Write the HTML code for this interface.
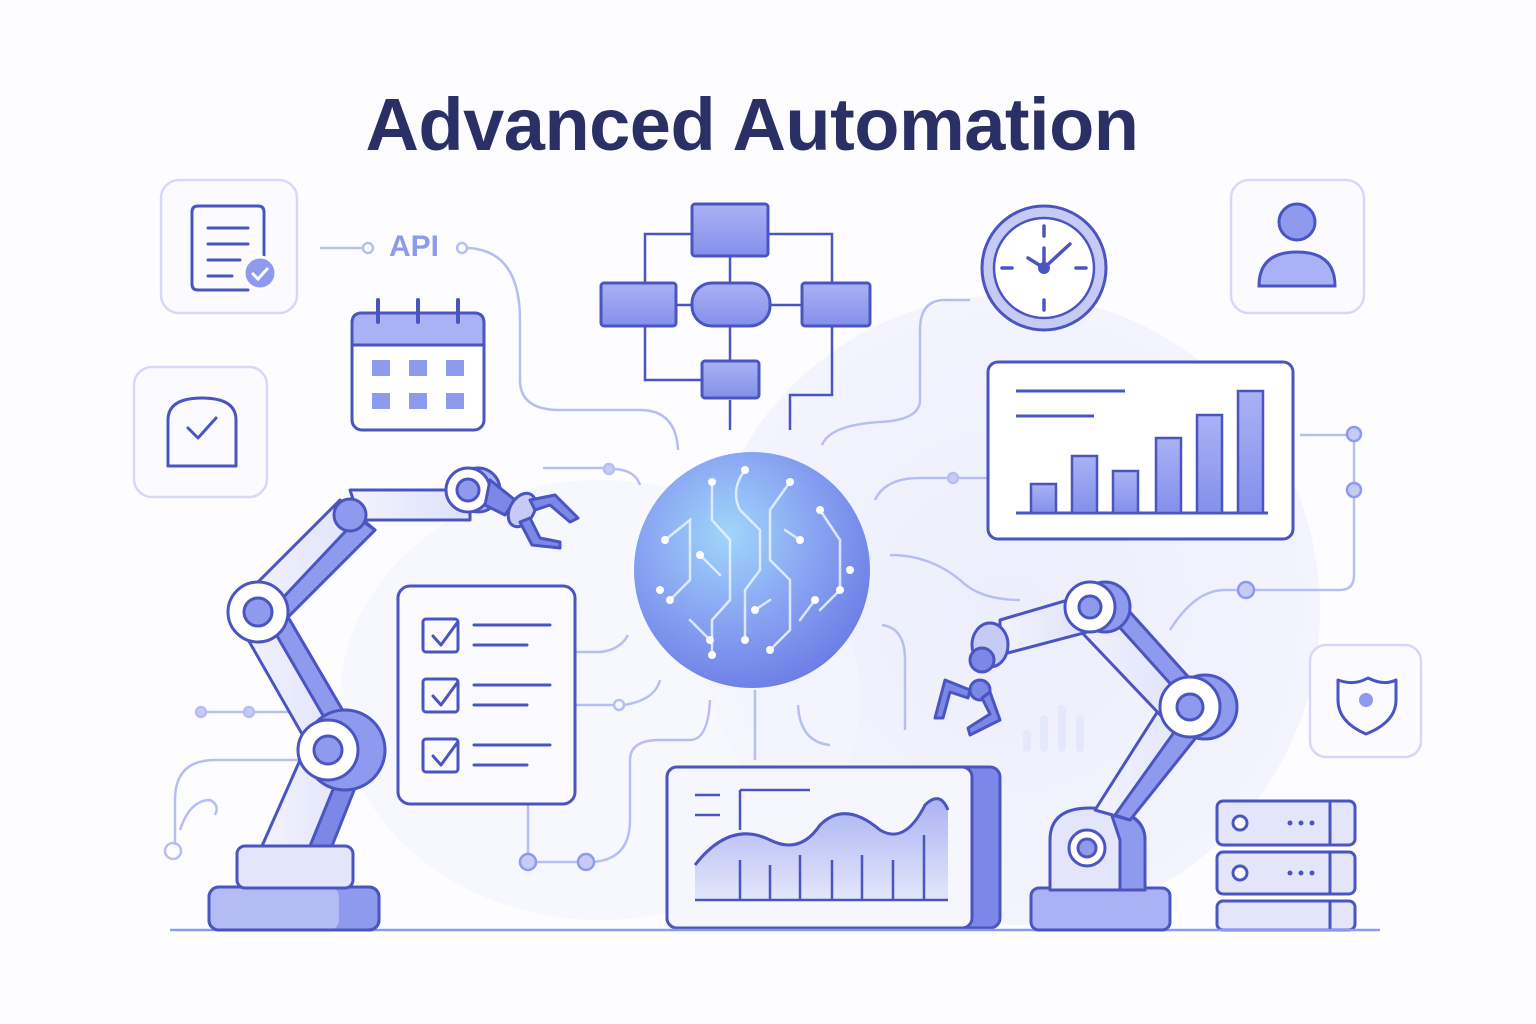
<!DOCTYPE html>
<html><head><meta charset="utf-8"><style>
html,body{margin:0;padding:0;background:#fff;width:1536px;height:1024px;overflow:hidden}
svg{display:block}
</style></head><body>
<svg width="1536" height="1024" viewBox="0 0 1536 1024" xmlns="http://www.w3.org/2000/svg">
<defs>
<radialGradient id="bg" cx="0.5" cy="0.5" r="0.5"><stop offset="0" stop-color="#eceefc"/><stop offset="1" stop-color="#f3f4fd"/></radialGradient>
<radialGradient id="sph" cx="0.4" cy="0.35" r="0.7"><stop offset="0" stop-color="#9fd6fb"/><stop offset="0.5" stop-color="#8aa6f2"/><stop offset="1" stop-color="#6b7be6"/></radialGradient>
<linearGradient id="arm" x1="0" x2="1"><stop offset="0" stop-color="#f2f3fd"/><stop offset="1" stop-color="#dde1fa"/></linearGradient>
<linearGradient id="blk" x1="0" y1="0" x2="0" y2="1"><stop offset="0" stop-color="#a9b2f5"/><stop offset="1" stop-color="#8390ea"/></linearGradient>
<linearGradient id="area" x1="0" y1="0" x2="0" y2="1"><stop offset="0" stop-color="#aab3f2"/><stop offset="1" stop-color="#e3e6fb"/></linearGradient>
</defs>
<rect width="1536" height="1024" fill="#fdfdff"/>
<ellipse cx="1010" cy="610" rx="310" ry="315" fill="url(#bg)"/>
<ellipse cx="600" cy="700" rx="260" ry="220" fill="#f4f5fd" opacity="0.7"/>
<text x="752" y="150" text-anchor="middle" font-family="Liberation Sans, sans-serif" font-weight="bold" font-size="74" letter-spacing="-0.5" fill="#2a3066">Advanced Automation</text>

<g fill="none" stroke="#b7bff2" stroke-width="2.5">
<path d="M320 248 H362"/><circle cx="368" cy="248" r="5"/><circle cx="462" cy="248" r="5"/>
<path d="M467 248 Q520 250 520 320 V380 Q520 410 560 410 H640 Q676 410 678 450"/>
<path d="M543 468 H604"/><circle cx="609" cy="469" r="5" fill="#c5cbf5"/><path d="M614 469 Q635 470 640 485"/>
<path d="M970 300 H945 Q920 300 920 330 V400 Q920 420 880 422 Q830 425 822 445"/>
<path d="M875 500 Q885 478 920 478 H948"/><circle cx="953" cy="478" r="5" fill="#c5cbf5"/><path d="M958 478 H988"/>
<path d="M890 555 Q930 555 960 580 Q980 600 1020 600"/>
<path d="M575 652 H600 Q620 650 628 635"/>
<path d="M575 705 H614"/><circle cx="619" cy="705" r="5"/><path d="M624 705 Q655 700 660 680"/>
<path d="M528 805 V860"/><path d="M533 862 H580"/><path d="M592 862 Q630 860 630 820 V760 Q630 740 660 740 H690 Q708 740 710 700"/>
<path d="M755 690 V760"/><path d="M798 705 Q800 742 830 745"/><path d="M882 625 Q905 628 905 660 V730"/>
<path d="M195 712 H300"/><circle cx="201" cy="712" r="5" fill="#c5cbf5"/><circle cx="249" cy="712" r="5" fill="#c5cbf5"/>
<path d="M175 845 V800 Q175 760 215 760 H305"/><circle cx="173" cy="851" r="8"/><path d="M180 830 Q190 800 210 800 Q220 805 215 815"/>
<path d="M1300 435 H1350"/><path d="M1354 440 V485"/><path d="M1354 495 V575 Q1354 590 1340 590 H1252"/><path d="M1240 590 H1225 Q1195 590 1170 630"/>
</g>
<g fill="#c5cbf5" stroke="#8e9aee" stroke-width="2.5">
<circle cx="1354" cy="434" r="7"/><circle cx="1354" cy="490" r="7"/><circle cx="1246" cy="590" r="8"/>
<circle cx="528" cy="862" r="8"/><circle cx="586" cy="862" r="8"/>
</g>
<text x="389" y="256" font-family="Liberation Sans, sans-serif" font-weight="bold" font-size="30" fill="#8e9aee">API</text>

<g fill="#fbfbff" stroke="#d5d9f7" stroke-width="2.5">
<rect x="161" y="180" width="136" height="133" rx="18"/>
<rect x="134" y="367" width="133" height="130" rx="18"/>
<rect x="1231" y="180" width="133" height="133" rx="18"/>
<rect x="1310" y="645" width="111" height="112" rx="16"/>
</g>
<g fill="none" stroke="#4a55c0" stroke-width="3" stroke-linecap="round" stroke-linejoin="round">
<path d="M248 290 H198 Q192 290 192 284 V212 Q192 206 198 206 H258 Q264 206 264 212 V258"/>
<path d="M208 228 H248 M208 244 H248 M208 260 H240 M208 276 H232"/>
<path d="M168 466 V420 Q168 398 202 398 Q236 398 236 420 V466 Z"/>
<path d="M188 428 L198 438 L216 418"/>
<path d="M1338 680 Q1354 686 1368 678 Q1384 686 1396 680 V700 Q1396 722 1366 734 Q1338 722 1338 700 Z"/>
</g>
<circle cx="260" cy="273" r="16" fill="#8e9aee" stroke="#fff" stroke-width="3"/>
<path d="M252 273 L258 279 L268 268" fill="none" stroke="#fff" stroke-width="3"/>
<circle cx="1366" cy="700" r="7" fill="#8e9aee"/>
<circle cx="1297" cy="222" r="18" fill="#8e9aee" stroke="#4a55c0" stroke-width="3"/>
<path d="M1259 286 Q1259 252 1297 252 Q1335 252 1335 286 Z" fill="#a9b2f5" stroke="#4a55c0" stroke-width="3"/>

<rect x="352" y="313" width="132" height="117" rx="10" fill="#fff" stroke="#4a55c0" stroke-width="3"/>
<path d="M352 345 V323 Q352 313 362 313 H474 Q484 313 484 323 V345 Z" fill="#a9b2f5" stroke="#4a55c0" stroke-width="3"/>
<path d="M378 300 V322 M418 300 V322 M458 300 V322" stroke="#4a55c0" stroke-width="4" stroke-linecap="round"/>
<g fill="#8e9aee"><rect x="372" y="360" width="18" height="16"/><rect x="409" y="360" width="18" height="16"/><rect x="446" y="360" width="18" height="16"/><rect x="372" y="393" width="18" height="16"/><rect x="409" y="393" width="18" height="16"/><rect x="446" y="393" width="18" height="16"/></g>

<g fill="none" stroke="#4a55c0" stroke-width="2.5">
<path d="M692 234 H645 V283 M768 234 H832 V283 M730 256 V282 M730 326 V360 M645 326 V380 H702 M832 326 V395 Q832 395 790 395 V430 M730 400 V430 M768 305 H802 M692 305 H675"/>
</g>
<g stroke="#4a55c0" stroke-width="3">
<rect x="692" y="204" width="76" height="52" rx="3" fill="url(#blk)"/>
<rect x="601" y="283" width="75" height="43" rx="3" fill="url(#blk)"/>
<rect x="692" y="283" width="78" height="43" rx="20" fill="url(#blk)"/>
<rect x="802" y="283" width="68" height="43" rx="3" fill="url(#blk)"/>
<rect x="702" y="361" width="57" height="37" rx="3" fill="url(#blk)"/>
</g>

<circle cx="1044" cy="268" r="62" fill="#c5cbf5" stroke="#4a55c0" stroke-width="3"/>
<circle cx="1044" cy="268" r="50" fill="#fff" stroke="#4a55c0" stroke-width="2.5"/>
<path d="M1044 226 V236 M1044 300 V310 M1002 268 H1012 M1076 268 H1086 M1044 268 L1044 248 M1044 268 L1070 244 M1044 268 L1028 258" stroke="#4a55c0" stroke-width="3.5" stroke-linecap="round"/>
<circle cx="1044" cy="268" r="6" fill="#4a55c0"/>

<rect x="988" y="362" width="305" height="177" rx="10" fill="#fff" stroke="#4a55c0" stroke-width="3"/>
<path d="M1016 391 H1125 M1016 416 H1094 M1016 513 H1268" stroke="#4a55c0" stroke-width="3"/>
<g fill="url(#blk)" stroke="#4a55c0" stroke-width="2.5">
<rect x="1031" y="484" width="25" height="29"/><rect x="1072" y="456" width="25" height="57"/><rect x="1113" y="471" width="25" height="42"/><rect x="1156" y="438" width="25" height="75"/><rect x="1197" y="415" width="25" height="98"/><rect x="1238" y="391" width="25" height="122"/>
</g>

<circle cx="752" cy="570" r="118" fill="url(#sph)"/>
<g fill="none" stroke="#e6f0ff" stroke-width="2.5" stroke-linecap="round" opacity="0.9">
<path d="M712 482 V520 L730 540 V600 L712 620 V655 M745 470 Q730 490 740 510 L760 530 V570 L745 590 V640 M790 482 L770 510 V560 L790 580 V630 L770 650 M665 540 L690 520 V580 L670 600 M820 510 L840 540 V590 L820 610 M785 530 L800 540 M690 620 L710 640 M800 620 L815 600 M720 575 L700 555 M770 600 L755 610"/>
</g>
<g fill="#fff"><circle cx="712" cy="482" r="4"/><circle cx="745" cy="470" r="4"/><circle cx="790" cy="482" r="4"/><circle cx="665" cy="540" r="4"/><circle cx="820" cy="510" r="4"/><circle cx="712" cy="655" r="4"/><circle cx="745" cy="640" r="4"/><circle cx="770" cy="650" r="4"/><circle cx="670" cy="600" r="4"/><circle cx="840" cy="590" r="4"/><circle cx="800" cy="540" r="4"/><circle cx="710" cy="640" r="4"/><circle cx="815" cy="600" r="4"/><circle cx="700" cy="555" r="4"/><circle cx="755" cy="610" r="4"/><circle cx="850" cy="570" r="4"/><circle cx="660" cy="590" r="4"/></g>

<rect x="398" y="586" width="177" height="218" rx="12" fill="#fbfbff" stroke="#4a55c0" stroke-width="3"/>
<g fill="none" stroke="#4a55c0" stroke-width="3" stroke-linecap="round" stroke-linejoin="round">
<rect x="423" y="619" width="35" height="33" rx="3"/><rect x="423" y="679" width="35" height="33" rx="3"/><rect x="423" y="739" width="35" height="33" rx="3"/>
<path d="M433 636 L441 645 L457 623 M433 696 L441 705 L457 683 M433 756 L441 765 L457 743"/>
<path d="M474 625 H550 M474 645 H527 M474 685 H550 M474 705 H527 M474 745 H550 M474 765 H527"/>
</g>

<rect x="667" y="767" width="333" height="161" rx="10" fill="#7b88e8" stroke="#4a55c0" stroke-width="3"/>
<rect x="667" y="767" width="305" height="161" rx="10" fill="#f6f7fe" stroke="#4a55c0" stroke-width="3"/>
<path d="M695 865 Q730 820 770 840 Q800 855 820 825 Q845 800 880 830 Q905 845 925 805 Q940 790 948 810 V900 H695 Z" fill="url(#area)"/>
<path d="M695 865 Q730 820 770 840 Q800 855 820 825 Q845 800 880 830 Q905 845 925 805 Q940 790 948 810" fill="none" stroke="#4a55c0" stroke-width="3"/>
<path d="M695 900 H948 M740 900 V860 M770 900 V865 M800 900 V855 M832 900 V860 M862 900 V855 M893 900 V860 M924 900 V835 M695 795 H720 M740 790 H810 M740 790 V830 M695 815 H720" stroke="#4a55c0" stroke-width="2.5" fill="none"/>

<g stroke="#4a55c0" stroke-width="3">
<rect x="1217" y="801" width="138" height="44" rx="6" fill="#e3e6fb"/>
<rect x="1217" y="852" width="138" height="42" rx="6" fill="#e3e6fb"/>
<rect x="1217" y="901" width="138" height="29" rx="6" fill="#e3e6fb"/>
<path d="M1330 801 V845 M1330 852 V894 M1330 901 V930" /></g>
<circle cx="1240" cy="823" r="7" fill="#fff" stroke="#4a55c0" stroke-width="3"/><circle cx="1240" cy="873" r="7" fill="#fff" stroke="#4a55c0" stroke-width="3"/>
<g fill="#4a55c0"><circle cx="1290" cy="823" r="2.5"/><circle cx="1301" cy="823" r="2.5"/><circle cx="1312" cy="823" r="2.5"/><circle cx="1290" cy="873" r="2.5"/><circle cx="1301" cy="873" r="2.5"/><circle cx="1312" cy="873" r="2.5"/></g>
<g fill="#e3e6fb" opacity="0.8"><rect x="1023" y="730" width="8" height="22" rx="4"/><rect x="1040" y="715" width="8" height="37" rx="4"/><rect x="1058" y="705" width="8" height="47" rx="4"/><rect x="1076" y="715" width="8" height="37" rx="4"/></g>

<path d="M170 930 H1380" stroke="#8e9aee" stroke-width="2.5"/>

<g stroke="#4a55c0" stroke-width="3" stroke-linejoin="round">
<rect x="209" y="887" width="170" height="43" rx="10" fill="#8e9aee"/>
<rect x="209" y="887" width="130" height="43" rx="10" fill="#b4bcf5" stroke="none"/>
<rect x="209" y="887" width="170" height="43" rx="10" fill="none"/>
<rect x="237" y="846" width="116" height="42" rx="8" fill="#e3e6fb"/>
<path d="M262 846 L300 760 L366 760 L330 846 Z" fill="url(#arm)"/>
<path d="M310 846 L345 760 L366 760 L332 846 Z" fill="#7b88e8"/>
<path d="M238 622 L278 600 L360 740 L318 762 Z" fill="url(#arm)"/>
<path d="M262 610 L278 600 L360 740 L343 750 Z" fill="#8e9aee"/>
<path d="M240 600 L340 500 L375 530 L275 630 Z" fill="url(#arm)"/>
<path d="M262 620 L358 518 L375 530 L275 630 Z" fill="#8e9aee"/>
<path d="M350 490 H470 V520 H360 Z" fill="url(#arm)"/>
<circle cx="345" cy="750" r="40" fill="#8e9aee"/>
<circle cx="328" cy="750" r="30" fill="#fff"/><circle cx="328" cy="750" r="14" fill="#8e9aee"/>
<circle cx="258" cy="612" r="30" fill="#fff"/><circle cx="258" cy="612" r="14" fill="#8e9aee"/>
<circle cx="350" cy="515" r="16" fill="#8e9aee"/>
<circle cx="478" cy="490" r="22" fill="#a9b2f5"/>
<circle cx="468" cy="490" r="22" fill="#fff"/><circle cx="468" cy="490" r="11" fill="#8e9aee"/>
<path d="M490 480 L515 500 L505 515 L485 505 Z" fill="#7b88e8"/>
<ellipse cx="522" cy="510" rx="12" ry="18" transform="rotate(30 522 510)" fill="#c5cbf5"/>
<path d="M530 500 L555 495 L578 518 L570 522 L550 505 L535 510 Z M520 522 L532 545 L560 548 L560 542 L540 538 L530 518 Z" fill="#7b88e8"/>
</g>

<g stroke="#4a55c0" stroke-width="3" stroke-linejoin="round">
<rect x="1031" y="888" width="139" height="42" rx="8" fill="#a9b2f5"/>
<path d="M1050 890 V840 Q1050 808 1090 808 Q1145 808 1145 840 V890 Z" fill="#e3e6fb"/>
<path d="M1110 810 Q1145 815 1145 840 V890 H1120 V840 Z" fill="#8e9aee"/>
<circle cx="1087" cy="848" r="18" fill="#fff"/><circle cx="1087" cy="848" r="9" fill="#8e9aee"/>
<path d="M1095 810 L1165 700 L1210 720 L1130 820 Z" fill="url(#arm)"/>
<path d="M1115 815 L1190 710 L1210 720 L1130 820 Z" fill="#8e9aee"/>
<path d="M1070 620 L1110 590 L1200 690 L1165 720 Z" fill="url(#arm)"/>
<path d="M1095 600 L1110 590 L1200 690 L1185 700 Z" fill="#8e9aee"/>
<path d="M1000 620 L1085 595 L1095 630 L1000 655 Z" fill="url(#arm)"/>
<circle cx="1205" cy="707" r="32" fill="#8e9aee"/>
<circle cx="1190" cy="707" r="30" fill="#fff"/><circle cx="1190" cy="707" r="13" fill="#8e9aee"/>
<circle cx="1105" cy="607" r="25" fill="#8e9aee"/>
<circle cx="1090" cy="607" r="25" fill="#fff"/><circle cx="1090" cy="607" r="11" fill="#8e9aee"/>
<ellipse cx="990" cy="645" rx="18" ry="22" fill="#c5cbf5"/>
<circle cx="982" cy="660" r="12" fill="#7b88e8"/>
<circle cx="980" cy="690" r="10" fill="#7b88e8"/>
<path d="M970 690 L945 680 L935 718 L943 718 L950 692 L968 698 Z M990 692 L1000 720 L970 735 L968 728 L990 714 L982 698 Z" fill="#7b88e8"/>
</g>
</svg>
</body></html>
